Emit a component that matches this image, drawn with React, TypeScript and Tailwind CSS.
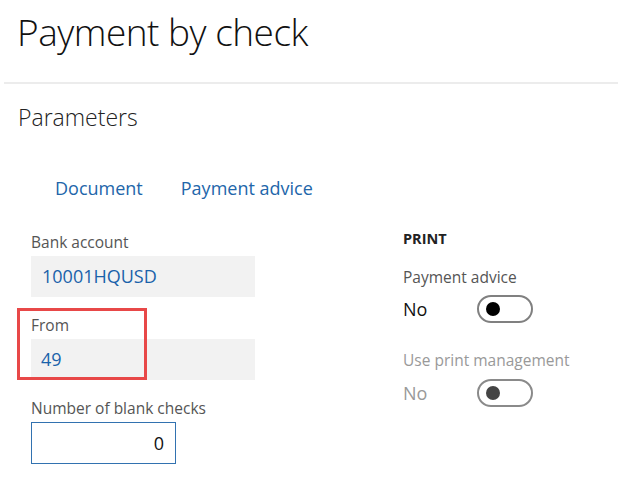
import React from "react";

function Toggle({ disabled }: { disabled?: boolean }) {
  return (
    <div
      className={`w-[56px] h-[28px] rounded-full border-2 flex items-center pl-[7px] ${
        disabled ? "border-[#8a8a8a]" : "border-[#808080]"
      }`}
    >
      <div className={`w-[14px] h-[14px] rounded-full ${disabled ? "bg-[#444444]" : "bg-black"}`} />
    </div>
  );
}

export default function App() {
  const font = { fontFamily: '"Open Sans", "Noto Sans", sans-serif' };
  return (
    <div className="w-[618px] h-[490px] bg-white overflow-hidden" style={font}>
      <div className="pl-[17px] pt-[8px] h-[82px]">
        <h1 className="text-[37px] leading-[48px] font-light text-[#111] tracking-[-0.5px]">Payment by check</h1>
      </div>
      <div className="ml-[4px] h-[2px] bg-[#ececec]" />
      <div className="pl-[18px] pt-[18px]">
        <h2 className="text-[23px] leading-[30px] font-light text-[#222]">Parameters</h2>
      </div>
      <div className="flex gap-[38px] pl-[55px] pt-[44px] text-[18px] leading-[24px] text-[#2266aa]">
        <span>Document</span>
        <span>Payment advice</span>
      </div>
      <div className="flex pt-[32px]">
        <div className="pl-[31px] w-[403px] flex flex-col">
          <div className="text-[15.5px] leading-[20px] text-[#555]">Bank account</div>
          <div className="mt-[4px] w-[224px] h-[41px] bg-[#f2f2f2] flex items-center pl-[11px] text-[18px] text-[#1a62aa]">
            10001HQUSD
          </div>
          <div className="relative mt-[18px]">
            <div className="absolute left-[-14px] top-[-7px] w-[130px] h-[72px] border-[3px] border-[#e84848] z-10 pointer-events-none" />
            <div className="text-[15.5px] leading-[20px] text-[#555]">From</div>
            <div className="mt-[4px] w-[224px] h-[41px] bg-[#f2f2f2] flex items-center pl-[10px] text-[18px] text-[#1a62aa]">
              49
            </div>
          </div>
          <div className="mt-[18px] text-[15.5px] leading-[20px] text-[#555]">Number of blank checks</div>
          <div className="mt-[4px] w-[145px] h-[42px] border border-[#3272b0] flex items-center justify-end pr-[11px] text-[18px] text-[#111]">
            0
          </div>
        </div>
        <div className="flex flex-col">
          <div className="mt-[-3px] text-[14.5px] leading-[20px] font-bold text-[#222]">PRINT</div>
          <div className="mt-[18px] text-[15.5px] leading-[20px] text-[#555]">Payment advice</div>
          <div className="mt-[8px] flex items-center">
            <span className="w-[74px] text-[18px] text-[#111]">No</span>
            <Toggle />
          </div>
          <div className="mt-[27px] text-[15.5px] leading-[20px] text-[#999]">Use print management</div>
          <div className="mt-[9px] flex items-center">
            <span className="w-[74px] text-[18px] text-[#999]">No</span>
            <Toggle disabled />
          </div>
        </div>
      </div>
    </div>
  );
}
